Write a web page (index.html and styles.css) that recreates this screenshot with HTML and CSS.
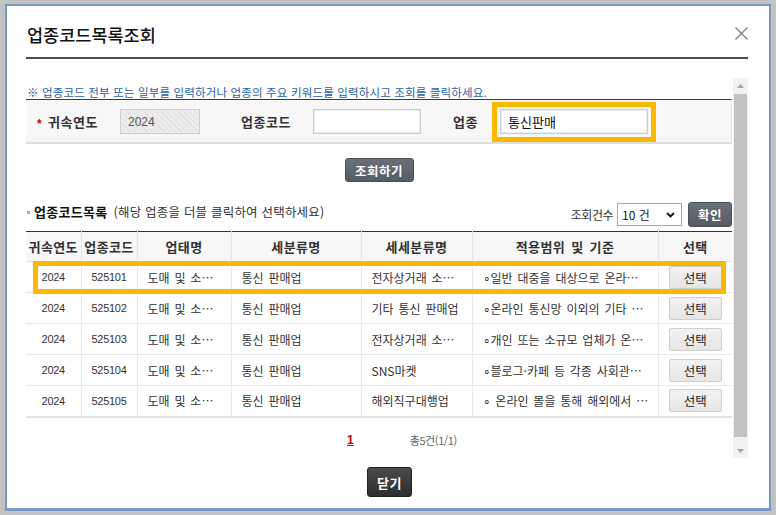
FILE: index.html
```html
<!DOCTYPE html>
<html lang="ko">
<head>
<meta charset="utf-8">
<title>업종코드목록조회</title>
<link rel="stylesheet" href="styles.css">
</head>
<body>
<div class="dialog">
  <div class="head">
    <h1 class="title">업종코드목록조회</h1>
    <button class="x" aria-label="닫기">
      <svg width="13" height="13" viewBox="0 0 13 13"><path d="M0.5 0.5 L12.5 12.5 M12.5 0.5 L0.5 12.5" stroke="#7a7a7a" stroke-width="1.1" fill="none"/></svg>
    </button>
  </div>

  <div class="scroll">
    <div class="content">
      <p class="notice">※ 업종코드 전부 또는 일부를 입력하거나 업종의 주요 키워드를 입력하시고 조회를 클릭하세요.</p>

      <div class="searchbox">
        <span class="req">*</span>
        <span class="lbl lbl-year">귀속연도</span>
        <div class="inp dis inp-year">2024</div>
        <span class="lbl lbl-code">업종코드</span>
        <div class="inp inp-code"></div>
        <span class="lbl lbl-biz">업종</span>
        <span class="hl"><span class="inp inp-biz">통신판매</span></span>
      </div>

      <div class="btnrow"><button class="dbtn btn-search">조회하기</button></div>

      <div class="listhead">
        <div class="lh-left">
          <span class="bullet"></span>
          <span class="lh-title">업종코드목록</span>
          <span class="lh-desc">(해당 업종을 더블 클릭하여 선택하세요)</span>
        </div>
        <div class="lh-right">
          <span class="cnt-lbl">조회건수</span>
          <div class="sel"><span class="sel-txt">10 건</span>
            <svg width="9" height="6" viewBox="0 0 9 6"><path d="M1 1 L4.5 4.5 L8 1" stroke="#111" stroke-width="1.8" fill="none"/></svg>
          </div>
          <button class="dbtn btn-ok">확인</button>
        </div>
      </div>

      <div class="tablewrap">
        <table class="grid">
          <colgroup>
            <col class="c1"><col class="c2"><col class="c3"><col class="c4"><col class="c5"><col class="c6"><col class="c7">
          </colgroup>
          <thead>
            <tr><th>귀속연도</th><th>업종코드</th><th>업태명</th><th>세분류명</th><th>세세분류명</th><th>적용범위 및 기준</th><th>선택</th></tr>
          </thead>
          <tbody>
            <tr><td class="num">2024</td><td class="num">525101</td><td>도매 및 소⋯</td><td>통신 판매업</td><td>전자상거래 소⋯</td><td>∘일반 대중을 대상으로 온라⋯</td><td class="ctr"><button class="sbtn">선택</button></td></tr>
            <tr><td class="num">2024</td><td class="num">525102</td><td>도매 및 소⋯</td><td>통신 판매업</td><td>기타 통신 판매업</td><td>∘온라인 통신망 이외의 기타 ⋯</td><td class="ctr"><button class="sbtn">선택</button></td></tr>
            <tr><td class="num">2024</td><td class="num">525103</td><td>도매 및 소⋯</td><td>통신 판매업</td><td>전자상거래 소⋯</td><td>∘개인 또는 소규모 업체가 온⋯</td><td class="ctr"><button class="sbtn">선택</button></td></tr>
            <tr><td class="num">2024</td><td class="num">525104</td><td>도매 및 소⋯</td><td>통신 판매업</td><td>SNS마켓</td><td>∘블로그·카페 등 각종 사회관⋯</td><td class="ctr"><button class="sbtn">선택</button></td></tr>
            <tr><td class="num">2024</td><td class="num">525105</td><td>도매 및 소⋯</td><td>통신 판매업</td><td>해외직구대행업</td><td>∘ 온라인 몰을 통해 해외에서 ⋯</td><td class="ctr"><button class="sbtn">선택</button></td></tr>
          </tbody>
        </table>
        <div class="rowmark"></div>
      </div>

      <div class="paging">
        <a class="page-cur">1</a>
        <span class="total">총5건(1/1)</span>
      </div>
    </div>

    <div class="vscroll">
      <div class="sb-btn"><svg width="7" height="4" viewBox="0 0 7 4"><path d="M0 4 L3.5 0 L7 4 Z" fill="#a3a3a3"/></svg></div>
      <div class="sb-track"><div class="sb-thumb"></div></div>
      <div class="sb-btn"><svg width="7" height="4" viewBox="0 0 7 4"><path d="M0 0 L3.5 4 L7 0 Z" fill="#a3a3a3"/></svg></div>
    </div>
  </div>

  <div class="foot"><button class="close">닫기</button></div>
</div>
</body>
</html>
```

FILE: styles.css
```css
* { box-sizing: border-box; }

html, body {
  margin: 0;
  padding: 0;
}

body {
  background: #c3c3c3;
  font-family: "Noto Sans CJK KR", "Noto Sans", sans-serif;
  font-size: 12px;
  color: #333;
  width: 776px;
  height: 515px;
  overflow: hidden;
}

button {
  font-family: inherit;
  cursor: pointer;
  padding: 0;
}

.dialog {
  width: 766px;
  height: 507px;
  margin: 4px 0 0 5px;
  background: #fff;
  border: 2px solid #7598c6;
  border-bottom-width: 3px;
  padding: 0 21px 0 19px;
}

/* header */
.head {
  display: flex;
  justify-content: space-between;
  align-items: center;
  padding: 18px 0 12px 1px;
  border-bottom: 2px solid #4d4d4d;
}

.title {
  margin: 0;
  font-size: 17.5px;
  line-height: 21px;
  font-weight: 500;
  color: #111;
}

.x {
  width: 13px;
  height: 13px;
  border: 0;
  background: none;
  display: flex;
  margin-top: -2px;
}

/* scroll area */
.scroll {
  margin-top: 19px;
  height: 380px;
  display: flex;
  gap: 1px;
}

.content {
  width: 706px;
  height: 380px;
  overflow: hidden;
}

.notice {
  margin: 0;
  height: 21px;
  padding: 7px 0 0 1px;
  font-size: 11.5px;
  letter-spacing: 0.15px;
  line-height: 14px;
  color: #1f5fa8;
  white-space: nowrap;
}

/* search box */
.searchbox {
  display: flex;
  align-items: center;
  height: 45px;
  padding: 9px 0 8px 11px;
  background: #f7f7f7;
  border-top: 1px solid #3c3c3c;
  border-bottom: 2px solid #dedede;
  border-right: 1px solid #e2e2e2;
}

.req {
  color: #d40000;
  font-family: "Liberation Sans", sans-serif;
  font-size: 12px;
  font-weight: 700;
  width: 11px;
  flex: none;
  padding-top: 4px;
}

.lbl {
  flex: none;
  font-weight: 700;
  font-size: 13px;
  color: #333;
  letter-spacing: 0.5px;
  line-height: 16px;
  white-space: nowrap;
}

.lbl-year { width: 50px; }

.inp {
  flex: none;
  height: 25px;
  background: #fff;
  border: 1px solid #cdcdcd;
  box-shadow: inset 0 0 0 1px #ececec;
  display: flex;
  align-items: center;
}

.inp-year {
  width: 80px;
  margin-left: 22px;
  padding-left: 7px;
  font-family: "Liberation Sans", sans-serif;
  font-size: 12px;
  color: #555;
  background: repeating-linear-gradient(45deg, #ececec 0 3px, #dedede 3px 4px);
}

.lbl-code {
  width: 50px;
  margin-left: 41px;
}

.inp-code {
  width: 108px;
  margin-left: 22px;
}

.lbl-biz {
  width: 24px;
  margin-left: 32px;
}

.hl {
  position: relative;
  flex: none;
  margin-left: 23px;
  display: flex;
}

.hl::after {
  content: "";
  position: absolute;
  left: -8px;
  right: -8px;
  top: -7px;
  bottom: -8px;
  border: 5px solid #fbb800;
}

.inp-biz {
  width: 148px;
  padding-left: 7px;
  font-size: 13px;
  color: #111;
}

/* search button */
.btnrow {
  display: flex;
  justify-content: center;
  margin-top: 14px;
}

.dbtn {
  height: 24px;
  background: linear-gradient(#6a7078, #565c64);
  border: 1px solid #4a4f56;
  border-radius: 3px;
  color: #fff;
  font-weight: 700;
  font-size: 12.5px;
  letter-spacing: 0.5px;
}

.btn-search { width: 69px; }

/* list header */
.listhead {
  display: flex;
  justify-content: space-between;
  align-items: center;
  height: 25px;
  margin-top: 20px;
  margin-bottom: 4px;
}

.lh-left {
  display: flex;
  align-items: center;
  margin-bottom: 5px;
  line-height: 16px;
  white-space: nowrap;
}

.bullet {
  width: 3px;
  height: 3px;
  background: #aaa;
  margin: 0 4px 0 1px;
}

.lh-title {
  font-weight: 700;
  font-size: 13px;
  color: #111;
  letter-spacing: 0.3px;
}

.lh-desc {
  margin-left: 6px;
  font-size: 12.5px;
  letter-spacing: 0.2px;
  color: #333;
}

.lh-right {
  display: flex;
  align-items: center;
}

.cnt-lbl {
  letter-spacing: -0.5px;
  color: #333;
}

.sel {
  width: 65px;
  height: 23px;
  margin-left: 4px;
  border: 1px solid #a9a9a9;
  background: #fff;
  display: flex;
  align-items: center;
  justify-content: space-between;
  padding: 0 6px 0 4px;
}

.sel-txt { color: #222; }

.btn-ok {
  width: 44px;
  height: 25px;
  margin-left: 6px;
}

/* table */
.tablewrap {
  position: relative;
}

.grid {
  width: 706px;
  table-layout: fixed;
  border-collapse: collapse;
  border-top: 1px solid #333;
  border-bottom: 2px solid #e2e2e2;
}

.c1 { width: 55px; }
.c2 { width: 56px; }
.c3 { width: 94px; }
.c4 { width: 130px; }
.c5 { width: 111px; }
.c6 { width: 186px; }
.c7 { width: 74px; }

.grid th {
  height: 30px;
  padding: 0;
  background: #f7f7f7;
  font-weight: 700;
  font-size: 13px;
  letter-spacing: 0.4px;
  word-spacing: 2px;
  color: #333;
  text-align: center;
  white-space: nowrap;
  overflow: hidden;
  border-left: 1px solid #e4e4e4;
  border-bottom: 1px solid #e4e4e4;
}

.grid td {
  height: 31px;
  padding: 0 0 0 10px;
  color: #333;
  white-space: nowrap;
  overflow: hidden;
  word-spacing: 1.5px;
  border-left: 1px solid #ebebeb;
  border-bottom: 1px solid #e9e9e9;
}

.grid th:first-child,
.grid td:first-child {
  border-left: 0;
}

.grid tbody tr:last-child td {
  border-bottom: 0;
}

.grid td.num {
  padding: 0;
  text-align: center;
  font-family: "Liberation Sans", sans-serif;
  font-size: 11px;
  letter-spacing: -0.3px;
  color: #333;
}

.grid td.ctr {
  padding: 0;
  text-align: center;
}

.sbtn {
  width: 53px;
  height: 23px;
  background: linear-gradient(#f3f3f3, #e5e5e5);
  border: 1px solid #cfcfcf;
  border-radius: 2px;
  font-size: 12.5px;
  color: #222;
  vertical-align: middle;
}

.rowmark {
  position: absolute;
  left: 7px;
  top: 30px;
  width: 693px;
  height: 33px;
  border: 5px solid #fbb800;
  pointer-events: none;
}

/* paging */
.paging {
  display: flex;
  align-items: center;
  height: 16px;
  margin-top: 14px;
  padding-left: 321px;
}

.page-cur {
  color: #cc0000;
  font-weight: 700;
  text-decoration: underline;
  font-family: "Liberation Sans", sans-serif;
  font-size: 12px;
}

.total {
  margin-left: 56px;
  font-size: 11px;
  color: #666;
  letter-spacing: -0.4px;
}

/* scrollbar */
.vscroll {
  width: 15px;
  height: 380px;
  background: #f1f1f1;
  display: flex;
  flex-direction: column;
}

.sb-btn {
  height: 15px;
  display: flex;
  align-items: center;
  justify-content: center;
}

.sb-track {
  flex: 1;
  padding: 1px 1px 0;
}

.sb-thumb {
  height: 343px;
  background: #c1c1c1;
}

/* footer */
.foot {
  display: flex;
  justify-content: center;
  margin-top: 9px;
  padding-left: 5px;
}

.close {
  width: 45px;
  height: 30px;
  background: linear-gradient(#4a4a4a, #2e2e2e);
  border: 1px solid #1f1f1f;
  border-radius: 3px;
  color: #fff;
  font-weight: 700;
  font-size: 13px;
  letter-spacing: 0.5px;
}
```
